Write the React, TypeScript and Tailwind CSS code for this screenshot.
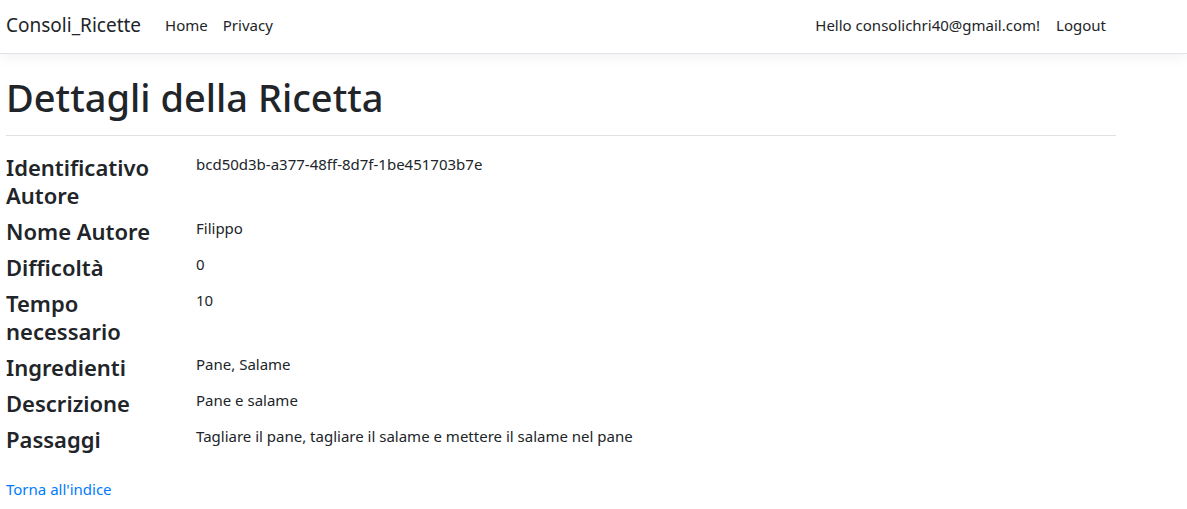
import React from "react";

const rows: [string, string][] = [
  ["Identificativo Autore", "bcd50d3b-a377-48ff-8d7f-1be451703b7e"],
  ["Nome Autore", "Filippo"],
  ["Difficoltà", "0"],
  ["Tempo necessario", "10"],
  ["Ingredienti", "Pane, Salame"],
  ["Descrizione", "Pane e salame"],
  ["Passaggi", "Tagliare il pane, tagliare il salame e mettere il salame nel pane"],
];

export default function App() {
  return (
    <div
      className="min-h-[509px] bg-white text-[#212529]"
      style={{ fontFamily: '"Noto Sans", "Open Sans", sans-serif' }}
    >
      <nav className="h-[54px] border-b border-[#e2e2ea] bg-white shadow-[0_4px_12px_rgba(0,0,0,0.05)]">
        <div className="flex h-full w-[1116px] items-center pb-[2px] pl-[6px]">
          <span className="mr-[24px] text-[19px]">Consoli_Ricette</span>
          <span className="text-[15px]">Home</span>
          <span className="ml-[15px] text-[15px]">Privacy</span>
          <div className="ml-auto flex items-center text-[15px]">
            <span>Hello consolichri40@gmail.com!</span>
            <span className="ml-[16px] pr-[10px]">Logout</span>
          </div>
        </div>
      </nav>
      <main className="w-[1116px] pl-[6px] pt-[21px]">
        <h1 className="text-[38px] font-medium leading-[1.2]">Dettagli della Ricetta</h1>
        <div className="mt-[14px] mb-[17px] border-t border-[#e1e1e1]" />
        <dl>
          {rows.map(([k, v]) => (
            <div key={k} className="flex mb-[8px]">
              <dt className="w-[190px] shrink-0 pr-[20px] text-[22px] font-semibold leading-[28px]">{k}</dt>
              <dd className="text-[15px] leading-[22px]">{v}</dd>
            </div>
          ))}
        </dl>
        <a className="mt-[25px] block text-[15px] text-[#007bff]">Torna all&apos;indice</a>
      </main>
    </div>
  );
}
